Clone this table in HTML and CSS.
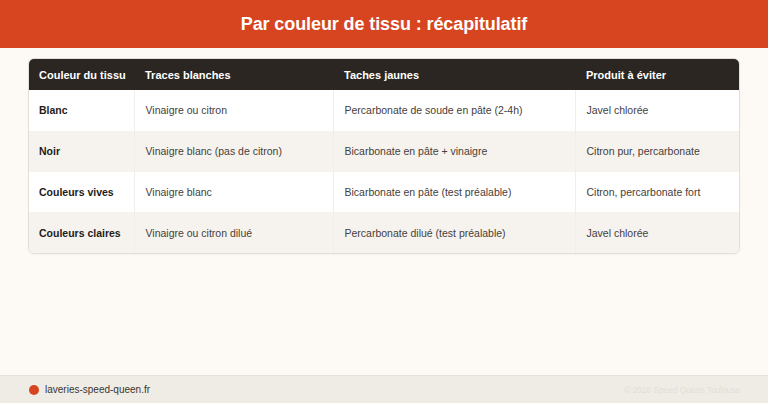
FILE: index.html
```html
<!DOCTYPE html>
<html lang="fr">
<head>
<meta charset="utf-8">
<link rel="stylesheet" href="styles.css">
</head>
<body>
<div class="page">
  <header class="topbar"><h1>Par couleur de tissu : récapitulatif</h1></header>
  <main class="content">
    <div class="card">
      <table class="recap">
        <colgroup><col class="w1"><col class="w2"><col class="w3"><col class="w4"></colgroup>
        <thead>
          <tr><th class="c1">Couleur du tissu</th><th>Traces blanches</th><th>Taches jaunes</th><th>Produit à éviter</th></tr>
        </thead>
        <tbody>
          <tr><td class="c1">Blanc</td><td>Vinaigre ou citron</td><td>Percarbonate de soude en pâte (2-4h)</td><td>Javel chlorée</td></tr>
          <tr><td class="c1">Noir</td><td>Vinaigre blanc (pas de citron)</td><td>Bicarbonate en pâte + vinaigre</td><td>Citron pur, percarbonate</td></tr>
          <tr><td class="c1">Couleurs vives</td><td>Vinaigre blanc</td><td>Bicarbonate en pâte (test préalable)</td><td>Citron, percarbonate fort</td></tr>
          <tr><td class="c1">Couleurs claires</td><td>Vinaigre ou citron dilué</td><td>Percarbonate dilué (test préalable)</td><td>Javel chlorée</td></tr>
        </tbody>
      </table>
    </div>
  </main>
  <footer class="foot">
    <div class="brand"><span class="dot"></span><span>laveries-speed-queen.fr</span></div>
    <div class="copy">© 2026 Speed Queen Toulouse</div>
  </footer>
</div>
</body>
</html>
```
FILE: styles.css
```css
* { box-sizing: border-box; }
html, body { margin: 0; padding: 0; }
body {
  font-family: "Liberation Sans", Arial, sans-serif;
  background: #fdfaf6;
  color: #2b2622;
}
.page {
  width: 768px;
  height: 403px;
  display: flex;
  flex-direction: column;
}
.topbar {
  background: #d64520;
  height: 48px;
  flex: none;
  display: flex;
  align-items: center;
  justify-content: center;
}
.topbar h1 {
  margin: 0;
  color: #fff;
  font-size: 18px;
  font-weight: 700;
  letter-spacing: -0.1px;
}
.content {
  flex: 1;
  padding: 10px 28px 0 28px;
}
.card {
  border: 1px solid #e3ded7;
  border-radius: 6px;
  overflow: hidden;
  background: #fff;
  box-shadow: 0 1px 2px rgba(0,0,0,0.04);
}
.recap {
  width: 100%;
  table-layout: fixed;
  border-collapse: collapse;
  font-size: 10.5px;
}
.w1 { width: 105px; }
.w2 { width: 199px; }
.w3 { width: 242px; }
.recap th {
  background: #2b2622;
  color: #fff;
  font-weight: 700;
  font-size: 11px;
  text-align: left;
  white-space: nowrap;
  height: 31px;
  padding: 0 0 0 11px;
}
.recap th.c1 { padding-left: 10px; }
.recap td {
  height: 40.75px;
  padding: 0 10px 0 11px;
  color: #45403c;
  white-space: nowrap;
  border-left: 1px solid #f1eee9;
}
.recap td.c1 {
  border-left: none;
  padding-left: 10px;
  font-weight: 700;
  color: #1f1b18;
}
.recap tbody tr:nth-child(even) td { background: #f6f3ee; }
.foot {
  height: 28px;
  flex: none;
  background: #efece6;
  border-top: 1px solid #e6e2db;
  display: flex;
  align-items: center;
  justify-content: space-between;
  padding: 0 28px 0 29px;
}
.brand { display: flex; align-items: center; gap: 6px; color: #3a3430; font-size: 10px; }
.dot { width: 10px; height: 10px; border-radius: 50%; background: #d64520; display: inline-block; }
.copy { color: #e2ded7; font-size: 8.3px; }
```
